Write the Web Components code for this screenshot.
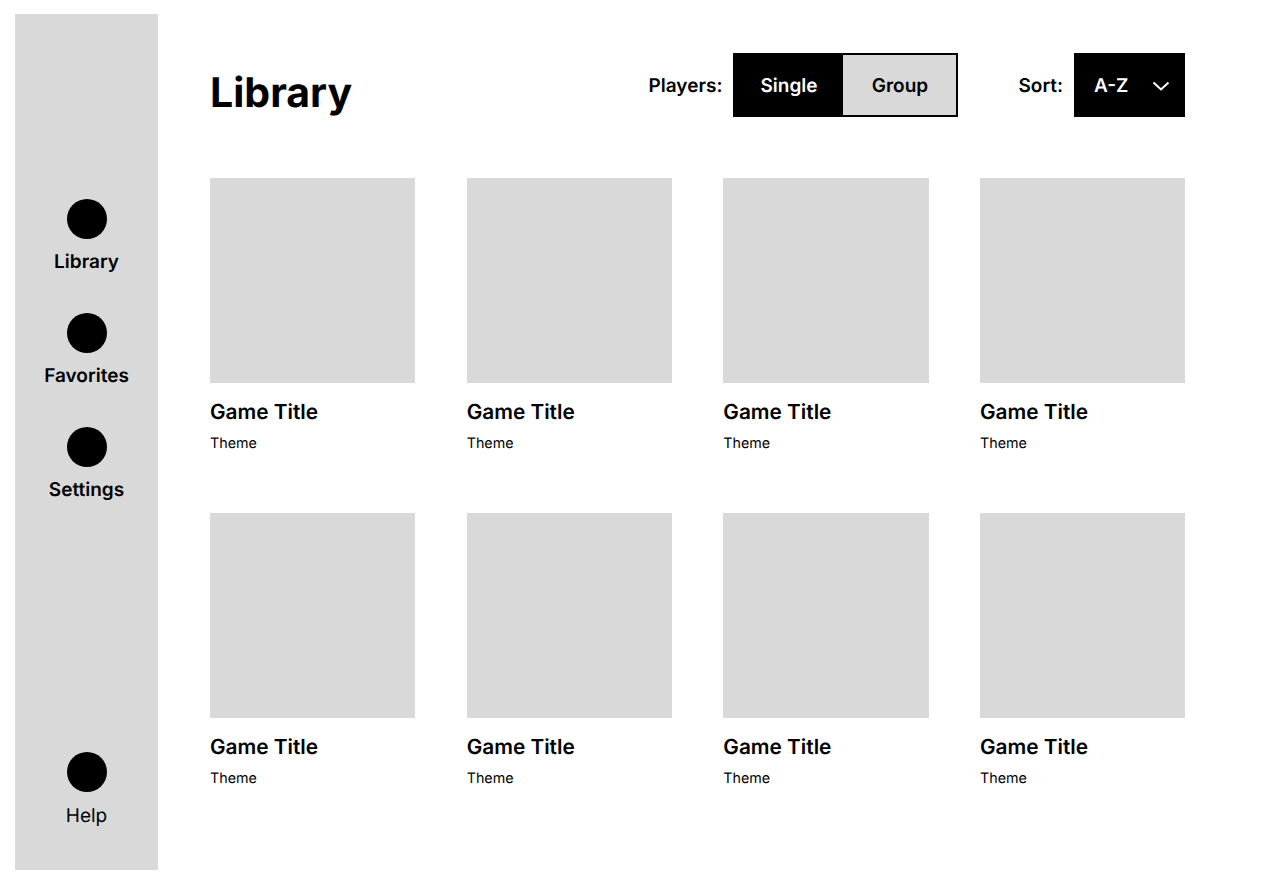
<!DOCTYPE html>
<html lang="en">
<head>
<meta charset="utf-8">
<title>Library</title>
<style>
	html, body { margin: 0; height: 100%; background: #fff; }
	body { font-family: Inter, "Liberation Sans", sans-serif; color: #000; font-optical-sizing: none; text-rendering: geometricPrecision; }
</style>
</head>
<body>
<app-shell>
	<side-nav slot="nav">
		<nav-item bold>Library</nav-item>
		<nav-item bold>Favorites</nav-item>
		<nav-item bold>Settings</nav-item>
		<nav-item slot="bottom">Help</nav-item>
	</side-nav>
	<library-header>
		<player-toggle></player-toggle>
		<sort-select slot="sort"></sort-select>
	</library-header>
	<game-grid></game-grid>
</app-shell>

<script>
	// Plain template string helper
	const html = (strings, ...values) => {
		let str = '';
		strings.forEach((string, i) => {
			str += string + (values[i] ?? '');
		});
		return str;
	};

	const define = (name, markup) => {
		customElements.define(
			name,
			class extends HTMLElement {
				constructor() {
					super();
					this.attachShadow({ mode: 'open' });
					this.shadowRoot.innerHTML = markup;
				}
			}
		);
	};

	define('app-shell', html`
		<style>
			:host {
				display: flex;
				box-sizing: border-box;
				height: 882px;
				padding: 14px 0 12px 15px;
			}
			main {
				flex: 1;
				padding: 39px 94.67px 0 52px;
			}
		</style>
		<slot name="nav"></slot>
		<main><slot></slot></main>
	`);

	define('side-nav', html`
		<style>
			:host {
				display: flex;
				flex-direction: column;
				justify-content: space-between;
				box-sizing: border-box;
				width: 143px;
				padding: 185px 0 42px;
				background: #d9d9d9;
			}
			.top {
				display: flex;
				flex-direction: column;
				gap: 39px;
			}
		</style>
		<div class="top"><slot></slot></div>
		<slot name="bottom"></slot>
	`);

	define('nav-item', html`
		<style>
			:host {
				display: flex;
				flex-direction: column;
				align-items: center;
				gap: 11px;
				font-size: 19px;
				line-height: 25px;
				white-space: nowrap;
			}
			:host([bold]) {
				gap: 10px;
				font-weight: 600;
			}
			.dot {
				width: 40px;
				height: 40px;
				border-radius: 50%;
				background: #000;
			}
		</style>
		<div class="dot"></div>
		<slot></slot>
	`);

	define('library-header', html`
		<style>
			:host {
				display: flex;
				align-items: flex-start;
				height: 64px;
				margin-bottom: 61px;
			}
			h1 {
				flex: 1;
				margin: 12px 0 0;
				font-size: 41px;
				line-height: 54px;
				font-weight: 700;
			}
			.sort {
				margin-left: 60px;
			}
		</style>
		<h1>Library</h1>
		<slot></slot>
		<div class="sort"><slot name="sort"></slot></div>
	`);

	define('player-toggle', html`
		<style>
			:host {
				display: flex;
				align-items: center;
				gap: 11px;
				font-size: 19px;
				font-weight: 600;
			}
			.box {
				display: flex;
				box-sizing: border-box;
				width: 225px;
				height: 64px;
				border: 2px solid #000;
			}
			.box div {
				display: flex;
				align-items: center;
				justify-content: center;
			}
			.single {
				box-sizing: border-box;
				width: 108px;
				padding-right: 1px;
				background: #000;
				color: #fff;
			}
			.group {
				flex: 1;
				background: #d9d9d9;
			}
		</style>
		<span>Players:</span>
		<div class="box">
			<div class="single">Single</div>
			<div class="group">Group</div>
		</div>
	`);

	define('sort-select', html`
		<style>
			:host {
				display: flex;
				align-items: center;
				gap: 11px;
				font-size: 19px;
				font-weight: 600;
			}
			.box {
				display: flex;
				align-items: center;
				justify-content: space-between;
				box-sizing: border-box;
				width: 111.3px;
				height: 64px;
				padding: 0 15px 0 20px;
				background: #000;
				color: #fff;
			}
			svg {
				display: block;
				margin-top: 2px;
			}
		</style>
		<span>Sort:</span>
		<div class="box">
			<span>A-Z</span>
			<svg width="18" height="10" viewBox="0 0 18 10" fill="none" stroke="#fff" stroke-width="2">
				<path d="M1.5 1.5 9 8.500 16.500 1.500"/>
			</svg>
		</div>
	`);

	define('game-card', html`
		<style>
			:host {
				display: block;
			}
			.cover {
				aspect-ratio: 1;
				background: #d9d9d9;
			}
			h2 {
				margin: 16.5px 0 0;
				font-size: 20.8px;
				line-height: 25px;
				font-weight: 600;
			}
			p {
				margin: 10.5px 0 0;
				font-size: 14.3px;
				line-height: 17px;
			}
		</style>
		<div class="cover"></div>
		<h2>Game Title</h2>
		<p>Theme</p>
	`);

	const cards = '<game-card></game-card>'.repeat(8);
	define('game-grid', html`
		<style>
			:host {
				display: grid;
				grid-template-columns: repeat(4, 1fr);
				column-gap: 51.33px;
				row-gap: 60.67px;
			}
		</style>
		${cards}
	`);
</script>
</body>
</html>
